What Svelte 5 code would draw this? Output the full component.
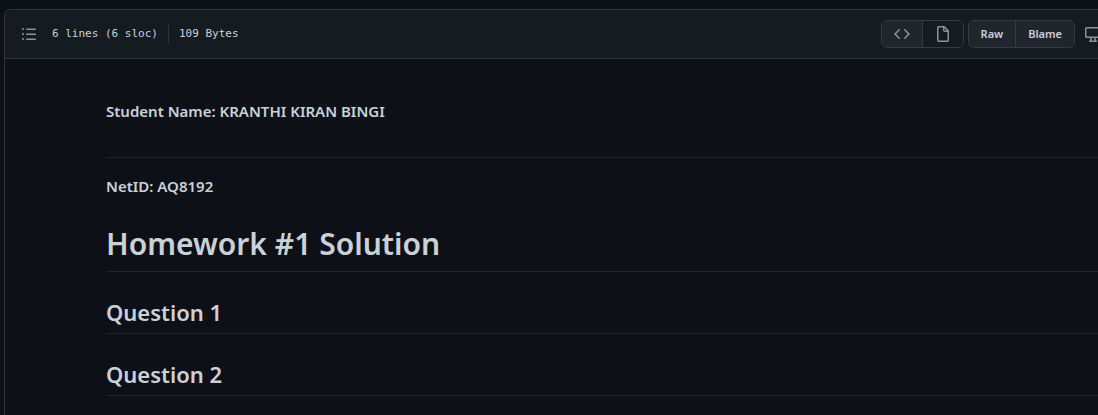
<script>
  const questions = ['Question 1', 'Question 2'];
</script>

<section class="file">
  <header class="toolbar">
    <div class="info">
      <button class="icon-button" aria-label="Table of contents">
        <svg viewBox="0 0 16 16" width="16" height="16" aria-hidden="true"><path fill-rule="evenodd" d="M2 4a1 1 0 100-2 1 1 0 000 2zm3.75-1.5a.75.75 0 000 1.5h8.5a.75.75 0 000-1.5h-8.5zm0 5a.75.75 0 000 1.5h8.5a.75.75 0 000-1.5h-8.5zm0 5a.75.75 0 000 1.5h8.5a.75.75 0 000-1.5h-8.5zM3 8a1 1 0 11-2 0 1 1 0 012 0zm-1 6a1 1 0 100-2 1 1 0 000 2z" /></svg>
      </button>
      <div class="stats">
        <span>6 lines (6 sloc)</span>
        <span class="divider"></span>
        <span>109 Bytes</span>
      </div>
    </div>
    <div class="actions">
      <div class="group views">
        <button aria-label="Display the source">
          <svg viewBox="0 0 16 16" width="16" height="16" aria-hidden="true"><path fill-rule="evenodd" d="M4.72 3.22a.75.75 0 011.06 1.06L2.06 8l3.72 3.72a.75.75 0 11-1.06 1.06L.47 8.53a.75.75 0 010-1.06l4.25-4.25zm6.56 0a.75.75 0 10-1.06 1.06L13.94 8l-3.72 3.72a.75.75 0 101.06 1.06l4.25-4.25a.75.75 0 000-1.06l-4.25-4.25z" /></svg>
        </button>
        <button class="selected" aria-label="Display the rendered file" aria-pressed="true">
          <svg viewBox="0 0 16 16" width="16" height="16" aria-hidden="true"><path fill-rule="evenodd" d="M3.75 1.5a.25.25 0 00-.25.25v12.5c0 .138.112.25.25.25h8.5a.25.25 0 00.25-.25V6H9.75A1.75 1.75 0 018 4.25V1.5H3.75zm5.75.56v2.19c0 .138.112.25.25.25h2.19L9.5 2.06zM2 1.75C2 .784 2.784 0 3.75 0h5.086c.464 0 .909.184 1.237.513l3.414 3.414c.329.328.513.773.513 1.237v9.086A1.75 1.75 0 0112.25 16h-8.5A1.75 1.75 0 012 14.25V1.75z" /></svg>
        </button>
      </div>
      <div class="group">
        <button>Raw</button>
        <button>Blame</button>
      </div>
      <button class="icon-button desktop" aria-label="Open in desktop">
        <svg viewBox="0 0 16 16" width="16" height="16" aria-hidden="true"><path fill-rule="evenodd" d="M1.75 2.5h12.5a.25.25 0 01.25.25v7.5a.25.25 0 01-.25.25H1.75a.25.25 0 01-.25-.25v-7.5a.25.25 0 01.25-.25zM14.25 1H1.75A1.75 1.75 0 000 2.75v7.5C0 11.216.784 12 1.75 12h3.727c-.1 1.041-.52 1.872-1.292 2.757A.75.75 0 004.75 16h6.5a.75.75 0 00.565-1.243c-.772-.885-1.193-1.716-1.292-2.757h3.727A1.75 1.75 0 0016 10.25v-7.5A1.75 1.75 0 0014.25 1zM9.018 12H6.982a5.72 5.72 0 01-.765 2.5h3.566a5.72 5.72 0 01-.765-2.5z" /></svg>
      </button>
    </div>
  </header>

  <article class="document">
    <h4>Student Name: KRANTHI KIRAN BINGI</h4>
    <hr />
    <h4>NetID: AQ8192</h4>
    <h1>Homework #1 Solution</h1>
    {#each questions as question}
      <h2>{question}</h2>
    {/each}
  </article>
</section>

<style>
  :global(body) {
    background: #0d1117;
    color: #c9d1d9;
    font-family: "Segoe UI", "Noto Sans", sans-serif;
  }

  .file {
    margin: 9px 0 0 4px;
    border: 1px solid #30363d;
    border-right: 0;
    border-bottom: 0;
    border-top-left-radius: 6px;
    overflow: hidden;
  }

  .toolbar {
    display: flex;
    align-items: center;
    justify-content: space-between;
    height: 48px;
    padding-left: 16px;
    background: #161b22;
    border-bottom: 1px solid #30363d;
  }

  .info,
  .actions,
  .stats {
    display: flex;
    align-items: center;
  }

  .info {
    gap: 15px;
  }

  .stats {
    gap: 10px;
    font: 11px/16px "DejaVu Sans Mono", monospace;
  }

  .divider {
    width: 1px;
    height: 18px;
    background: #30363d;
  }

  .actions {
    gap: 4px;
  }

  button {
    font: 600 11px/20px "Segoe UI", "Noto Sans", sans-serif;
    color: #c9d1d9;
    cursor: pointer;
  }

  svg {
    display: block;
    fill: #8b949e;
  }

  .icon-button {
    padding: 0;
    border: 0;
    background: none;
  }

  .desktop {
    margin: 0 -3px 0 6px;
  }

  .group {
    display: flex;
    height: 28px;
    box-sizing: border-box;
    border: 1px solid #363b42;
    border-radius: 6px;
    overflow: hidden;
  }

  .group button {
    display: flex;
    align-items: center;
    padding: 0 12px;
    border: 0;
    background: #21262d;
  }

  .group button + button {
    border-left: 1px solid #363b42;
  }

  .group .selected {
    background: #161b22;
  }

  .document {
    padding: 40px 0 19px 101px;
  }

  h1,
  h2,
  h4 {
    margin: 0;
    font-weight: 600;
  }

  h4 {
    font-size: 15px;
    line-height: 24px;
  }

  hr {
    height: 1px;
    margin: 34px 0 16px;
    border: 0;
    background: #21262d;
  }

  h1 {
    margin-top: 26px;
    padding-bottom: 7px;
    border-bottom: 1px solid #21262d;
    font-size: 30px;
    line-height: 40px;
  }

  h2 {
    margin-top: 25px;
    padding-bottom: 6px;
    border-bottom: 1px solid #21262d;
    font-size: 22px;
    line-height: 30px;
  }
</style>
